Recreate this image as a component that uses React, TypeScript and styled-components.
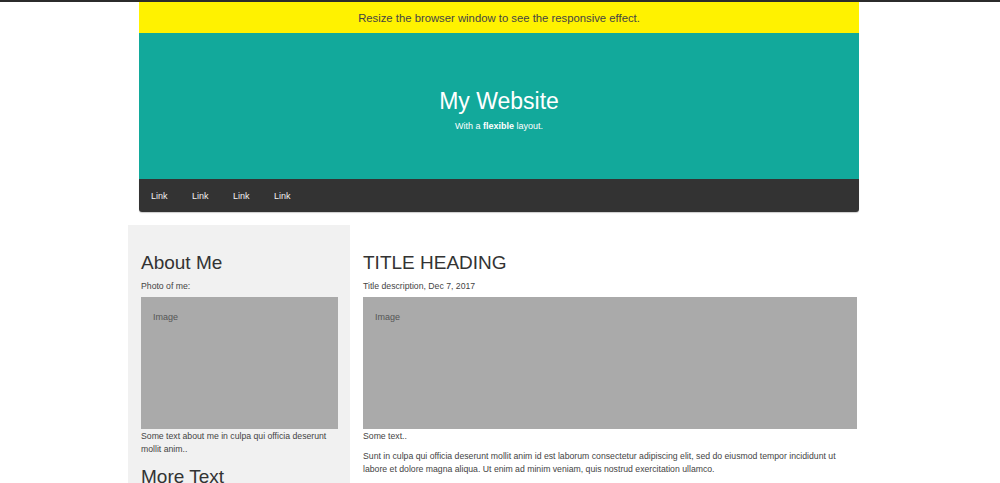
import React from "react";
import styled, { createGlobalStyle } from "styled-components";

const GlobalStyle = createGlobalStyle`
  html, body {
    margin: 0;
    padding: 0;
    background: #ffffff;
    font-family: "Liberation Sans", Arial, sans-serif;
    color: #333333;
  }
`;

const Page = styled.div`
  border-top: 2px solid #2b2b2b;
  height: 481px;
  overflow: hidden;
`;

const Container = styled.div`
  width: 720px;
  margin: 0 0 0 calc(50% - 361px);
`;

const Banner = styled.div`
  height: 31px;
  background: #fff200;
  display: flex;
  align-items: center;
  justify-content: center;
  font-size: 11.3px;
  color: #444;
`;

const Header = styled.header`
  height: 146px;
  background: #12a99b;
  display: flex;
  flex-direction: column;
  align-items: center;
  justify-content: center;
  color: #ffffff;
  padding-top: 6px;
  box-sizing: border-box;
`;

const SiteTitle = styled.h1`
  margin: 0;
  font-weight: 400;
  font-size: 23px;
  line-height: 28px;
`;

const Tagline = styled.p`
  margin: 6px 0 0;
  font-size: 9px;
`;

const Nav = styled.nav`
  height: 33px;
  background: #333333;
  border-radius: 0 0 3px 3px;
  display: flex;
  align-items: center;
  padding-left: 12px;
  box-shadow: 0 1px 1px rgba(0, 0, 0, 0.2);
`;

const NavLink = styled.a`
  color: #f2f2f2;
  font-size: 9px;
  text-decoration: none;
  margin-right: 24.5px;
`;

const Row = styled.div`
  width: 744px;
  margin: 13px auto 0;
  display: flex;
  align-items: stretch;
`;

const Side = styled.aside`
  width: 222px;
  flex-shrink: 0;
  box-sizing: border-box;
  background: #f1f1f1;
  padding: 14px 12px 40px 13px;
  min-height: 300px;
`;

const Main = styled.main`
  flex: 1;
  padding: 14px 15px 40px 13px;
`;

const Heading = styled.h2<{ $gap?: number }>`
  margin: ${(p) => p.$gap ?? 12}px 0 0;
  font-weight: 400;
  font-size: 19px;
  line-height: 24px;
  color: #333;
`;

const Small = styled.p<{ $gap?: number }>`
  margin: ${(p) => p.$gap ?? 0}px 0 0;
  font-size: 8.7px;
  line-height: 13px;
  color: #444;
`;

const ImageBox = styled.div`
  margin-top: 4px;
  height: 132px;
  background: #aaaaaa;
  padding: 15px 12px;
  box-sizing: border-box;
  font-size: 9px;
  color: #555;
`;

export default function App() {
  return (
    <Page>
      <GlobalStyle />
      <Container>
        <Banner>Resize the browser window to see the responsive effect.</Banner>
        <Header>
          <SiteTitle>My Website</SiteTitle>
          <Tagline>
            With a <b>flexible</b> layout.
          </Tagline>
        </Header>
        <Nav>
          <NavLink href="#">Link</NavLink>
          <NavLink href="#">Link</NavLink>
          <NavLink href="#">Link</NavLink>
          <NavLink href="#">Link</NavLink>
        </Nav>
      </Container>
      <Row>
        <Side>
          <Heading>About Me</Heading>
          <Small $gap={5}>Photo of me:</Small>
          <ImageBox>Image</ImageBox>
          <Small $gap={1}>Some text about me in culpa qui officia deserunt mollit anim..</Small>
          <Heading $gap={9}>More Text</Heading>
        </Side>
        <Main>
          <Heading>TITLE HEADING</Heading>
          <Small $gap={5}>Title description, Dec 7, 2017</Small>
          <ImageBox>Image</ImageBox>
          <Small $gap={1}>Some text..</Small>
          <Small $gap={7}>
            Sunt in culpa qui officia deserunt mollit anim id est laborum consectetur adipiscing elit, sed do eiusmod tempor incididunt ut labore et dolore magna aliqua. Ut enim ad minim veniam, quis nostrud exercitation ullamco.
          </Small>
        </Main>
      </Row>
    </Page>
  );
}
